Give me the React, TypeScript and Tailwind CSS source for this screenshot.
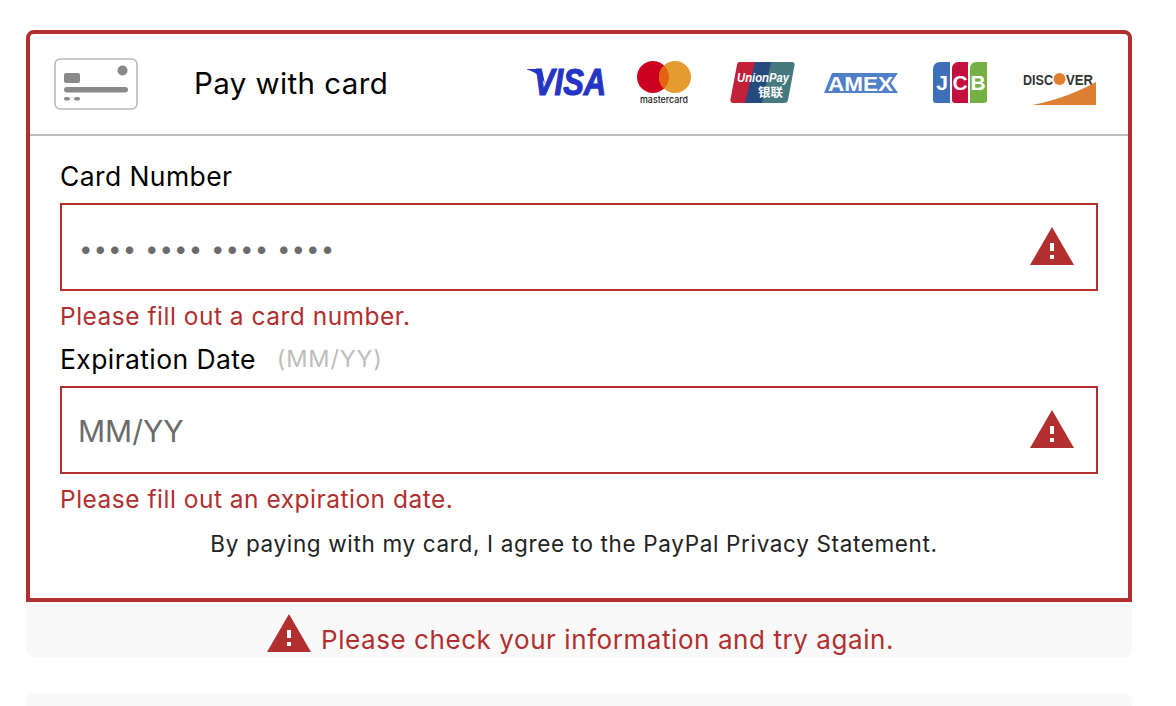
import React from "react";

const RED = "#b12f2f";

function WarningIcon() {
  return (
    <svg viewBox="0 0 44 38" className="h-[38px] w-[44px] shrink-0">
      <path d="M22 0 L44 38 L0 38 Z" fill={RED} />
      <rect x="20" y="16" width="4" height="8" fill="#fff" />
      <rect x="20" y="28" width="4" height="4" fill="#fff" />
    </svg>
  );
}

function CardIcon() {
  return (
    <svg viewBox="0 0 84 52" className="h-[52px] w-[84px] shrink-0">
      <rect x="1" y="1" width="82" height="50" rx="5" fill="#fff" stroke="#b9b9b9" strokeWidth="1.6" />
      <circle cx="68.500" cy="12.500" r="5" fill="#8a8a8a" />
      <rect x="10" y="15" width="16" height="10" rx="2" fill="#8a8a8a" />
      <rect x="10" y="29" width="64" height="5.500" rx="2.750" fill="#8a8a8a" />
      <rect x="10" y="39" width="6" height="3.500" rx="1.750" fill="#8a8a8a" />
      <rect x="20" y="39" width="6" height="3.500" rx="1.750" fill="#8a8a8a" />
    </svg>
  );
}

function VisaLogo() {
  return (
    <svg viewBox="0 0 79 27" className="h-[27px] w-[79px] overflow-visible">
      <path d="M0 1 H11 C14 1 15 2 15.500 4 L18 16 C15 9 8 4 0 1.600 Z" fill="#2434c4" />
      <text x="7" y="26.500" textLength="72" lengthAdjust="spacingAndGlyphs" fontFamily="Liberation Sans" fontWeight="700" fontStyle="italic" fontSize="36" fill="#2434c4" stroke="#2434c4" strokeWidth="1.200">
        VISA
      </text>
    </svg>
  );
}

function MastercardLogo() {
  return (
    <svg viewBox="0 0 54 43" className="h-[43px] w-[54px]">
      <circle cx="16" cy="16" r="16" fill="#cc0020" />
      <circle cx="38" cy="16" r="16" fill="#e39b2f" />
      <path d="M27 4.400 A16 16 0 0 1 27 27.600 A16 16 0 0 1 27 4.400 Z" fill="#e4610f" />
      <text x="3" y="42" textLength="48" lengthAdjust="spacingAndGlyphs" fontFamily="Inter" fontWeight="500" fontSize="9.500" fill="#222">
        mastercard
      </text>
    </svg>
  );
}

function UnionPayLogo() {
  return (
    <svg viewBox="0 0 65 41" className="h-[41px] w-[65px]">
      <path d="M9 0 H30 L22 41 H3 C1 41 0 39 0.500 37 L7 3 C7.400 1 8 0 9 0 Z" fill="#c3203a" />
      <path d="M25 0 H44 L36 41 H15 Z" fill="#264a7e" />
      <path d="M41 0 H62 C64 0 65 1.500 64.500 3.500 L58 38 C57.500 40 56.500 41 54 41 H32 Z" fill="#45797f" />
      <text x="7" y="19.500" textLength="52" lengthAdjust="spacingAndGlyphs" fontFamily="Liberation Sans" fontWeight="700" fontStyle="italic" fontSize="12" fill="#fff">
        UnionPay
      </text>
      <text x="28" y="35" textLength="25" lengthAdjust="spacingAndGlyphs" fontFamily="Noto Sans CJK SC, sans-serif" fontWeight="700" fontSize="12" fill="#fff">
        银联
      </text>
    </svg>
  );
}

function AmexLogo() {
  return (
    <svg viewBox="0 0 74 20" className="h-[20px] w-[74px]">
      <path d="M8 0 H74 L67 10 L74 20 H0 Z" fill="#4f80c8" />
      <text x="4" y="17.500" textLength="65" lengthAdjust="spacingAndGlyphs" fontFamily="Liberation Sans" fontWeight="700" fontSize="20" fill="#fff">
        AMEX
      </text>
    </svg>
  );
}

function JcbLogo() {
  return (
    <svg viewBox="0 0 54 41" className="h-[41px] w-[54px]">
      <path d="M7 0 H17 V41 H3 C1 41 0 40 0 38 V7 C0 3 3 0 7 0 Z" fill="#3f6fb8" />
      <path d="M25 0 H35 V41 H22 C20 41 19 40 19 38 V6 C19 3 22 0 25 0 Z" fill="#c4103f" />
      <path d="M43 0 H54 V38 C54 40 53 41 51 41 H37 V6 C37 3 40 0 43 0 Z" fill="#74b044" />
      <g fontFamily="Liberation Sans" fontWeight="700" fontSize="21" fill="#fff" textAnchor="middle">
        <text x="9" y="28">J</text>
        <text x="27" y="28">C</text>
        <text x="45" y="28">B</text>
      </g>
    </svg>
  );
}

function DiscoverLogo() {
  return (
    <svg viewBox="0 0 74 33" className="h-[33px] w-[74px]">
      <text x="1" y="12.500" textLength="30" lengthAdjust="spacingAndGlyphs" fontFamily="Liberation Sans" fontWeight="700" fontSize="14.500" fill="#333">
        DISC
      </text>
      <circle cx="37.500" cy="7" r="6" fill="#e07f2e" />
      <text x="44" y="12.500" textLength="27" lengthAdjust="spacingAndGlyphs" fontFamily="Liberation Sans" fontWeight="700" fontSize="14.500" fill="#333">
        VER
      </text>
      <path d="M10 33 C36 28 60 18 74 10 V33 Z" fill="#dd7f30" />
    </svg>
  );
}

function Field({
  label,
  hint,
  placeholder,
  error,
  inputClass,
}: {
  label: string;
  hint?: string;
  placeholder: string;
  error: string;
  inputClass: string;
}) {
  return (
    <div>
      <label className="flex h-[32px] items-center gap-[21px] text-[26.500px] leading-[32px] tracking-[0.4px] text-black">
        {label}
        {hint && <span className="text-[23.500px] tracking-[0.85px] text-[#bdbdbd]">{hint}</span>}
      </label>
      <div className="mt-[11px] flex h-[88px] items-center border-2 border-[#b12f2f] pl-[16px] pr-[22px]">
        <input readOnly placeholder={placeholder} className={`min-w-0 flex-1 bg-transparent pt-[3px] outline-none placeholder:text-[#6b6b6b] ${inputClass}`} />
        <div className="mb-[3px]">
          <WarningIcon />
        </div>
      </div>
      <p className="flex h-[50px] items-center text-[24.500px] tracking-[0.5px] text-[#b12f2f]">{error}</p>
    </div>
  );
}

export default function App() {
  return (
    <div className="h-[706px] w-full overflow-hidden bg-white pl-[26px] pr-[44px] pt-[30px] font-['Inter',sans-serif]">
      <div className="h-[572px] rounded-t-lg border-4 border-[#b12f2f]">
        <div className="flex h-[102px] items-center border-b-2 border-[#bbbbbb] pl-[24px]">
          <CardIcon />
          <span className="mb-px ml-[56px] text-[29.500px] tracking-[0.4px] text-black">Pay with card</span>
          <div className="mb-[3px] ml-auto mr-[32px] flex items-center">
            <div className="mb-[2px]"><VisaLogo /></div>
            <div className="ml-[31px]"><MastercardLogo /></div>
            <div className="ml-[39px]"><UnionPayLogo /></div>
            <div className="ml-[29px]"><AmexLogo /></div>
            <div className="ml-[35px]"><JcbLogo /></div>
            <div className="ml-[35px] mt-[12px]"><DiscoverLogo /></div>
          </div>
        </div>
        <div className="px-[30px] pt-[24px]">
          <Field
            label="Card Number"
            placeholder="•••• •••• •••• ••••"
            error="Please fill out a card number."
            inputClass="pl-px text-[24px] tracking-[1.05px]"
          />
          <div className="mt-[2px]">
            <Field
              label="Expiration Date"
              hint="(MM/YY)"
              placeholder="MM/YY"
              error="Please fill out an expiration date."
              inputClass="text-[30px]"
            />
          </div>
          <p className="mt-[3px] pr-[10px] text-center text-[22.500px] leading-[34px] tracking-[0.65px] text-[#222222]">
            By paying with my card, I agree to the PayPal Privacy Statement.
          </p>
        </div>
      </div>
      <div className="flex h-[55px] items-center justify-center gap-[10px] rounded-b-lg bg-[#f9f9f9] pl-[3px] pt-[6px] text-[26px] tracking-[0.57px] text-[#b12f2f]">
        <WarningIcon />
        <span className="mt-[14px]">Please check your information and try again.</span>
      </div>
      <div className="mt-[36px] h-[40px] rounded-t-lg bg-[#f9f9f9]" />
    </div>
  );
}
